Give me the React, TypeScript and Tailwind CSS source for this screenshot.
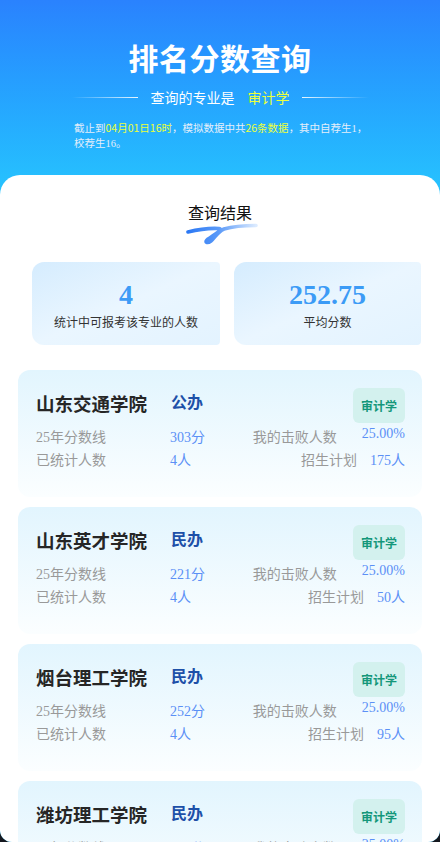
import React from "react";

const sans = { fontFamily: '"Noto Sans CJK SC", "Noto Sans", sans-serif' };
const serif = { fontFamily: '"Liberation Serif", "Noto Sans CJK SC", serif' };

type School = {
  name: string;
  type: string;
  score: string;
  count: string;
  beat: string;
  plan: string;
};

const schools: School[] = [
  { name: "山东交通学院", type: "公办", score: "303分", count: "4人", beat: "25.00%", plan: "175人" },
  { name: "山东英才学院", type: "民办", score: "221分", count: "4人", beat: "25.00%", plan: "50人" },
  { name: "烟台理工学院", type: "民办", score: "252分", count: "4人", beat: "25.00%", plan: "95人" },
  { name: "潍坊理工学院", type: "民办", score: "248分", count: "4人", beat: "25.00%", plan: "60人" },
];

function Squiggle() {
  return (
    <svg width="72" height="22" viewBox="0 0 72 22" className="block">
      <defs>
        <linearGradient id="sq" x1="0" y1="0" x2="1" y2="0">
          <stop offset="0" stopColor="#2b78f4" />
          <stop offset="0.45" stopColor="#5b9af8" />
          <stop offset="1" stopColor="#dcebff" />
        </linearGradient>
      </defs>
      <path
        d="M2 9 C 12 6.5, 24 5, 33 5.5 C 38 6, 28 12, 22 16 C 18 19, 21 21, 25 18 C 29 15, 31 9, 38 6 C 50 2.5, 62 2.5, 70 2.5"
        fill="none"
        stroke="url(#sq)"
        strokeWidth="3.6"
        strokeLinecap="round"
        strokeLinejoin="round"
      />
    </svg>
  );
}

function SchoolCard({ s }: { s: School }) {
  return (
    <div className="h-[127px] mb-[10px] shrink-0 rounded-[12px] bg-gradient-to-b from-[#e2f5fe] to-[#fbfeff] pt-[18px] pl-[18px] pr-[17px]">
      <div className="flex items-start justify-between">
        <div className="flex items-center pt-[3px]">
          <span className="text-[18.5px] leading-[24px] font-bold text-[#262626]" style={sans}>
            {s.name}
          </span>
          <span className="ml-[24px] -mt-[5px] text-[16px] leading-[22px] font-bold text-[#1d50a8]" style={sans}>
            {s.type}
          </span>
        </div>
        <div
          className="h-[35px] w-[52px] rounded-[6px] bg-[#d3f1ee] flex items-center justify-center text-[12px] font-bold text-[#14977a]"
          style={sans}
        >
          审计学
        </div>
      </div>
      <div className="mt-[3px] text-[14px] leading-[23px]" style={serif}>
        <div className="flex items-center">
          <span className="w-[134px] text-[#999999]">25年分数线</span>
          <span className="text-[#5b90f6]">{s.score}</span>
          <div className="flex-1 flex justify-end items-center">
            <span className="text-[#999999]">我的击败人数</span>
            <span className="ml-[25px] text-[#5b90f6] -translate-y-[4px]">{s.beat}</span>
          </div>
        </div>
        <div className="flex items-center">
          <span className="w-[134px] text-[#999999]">已统计人数</span>
          <span className="text-[#5b90f6]">{s.count}</span>
          <div className="flex-1 flex justify-end items-center">
            <span className="text-[#999999]">招生计划</span>
            <span className="ml-[13px] text-[#5b90f6]">{s.plan}</span>
          </div>
        </div>
      </div>
    </div>
  );
}

export default function App() {
  return (
    <div className="w-[440px] h-[842px] overflow-hidden bg-[#15181f]">
      <div className="h-full rounded-b-[12px] overflow-hidden flex flex-col bg-[#27c1fe]">
        {/* header */}
        <div className="h-[195px] -mb-[20px] shrink-0 flex flex-col items-center pt-[39px] bg-gradient-to-b from-[#2a82fe] to-[#27c4fe]">
          <h1 className="text-[30px] leading-[36px] font-bold text-white tracking-[0.5px]" style={sans}>
            排名分数查询
          </h1>
          <div className="mt-[12px] flex items-center h-[20px]">
            <div className="w-[66px] h-px bg-gradient-to-r from-transparent to-white/90" />
            <span className="ml-[13px] text-[14px] leading-[20px] text-white" style={sans}>
              查询的专业是
            </span>
            <span className="ml-[13px] text-[14px] leading-[20px] text-[#ebff3c]" style={sans}>
              审计学
            </span>
            <div className="ml-[12px] w-[67px] h-px bg-gradient-to-r from-white/90 to-transparent" />
          </div>
          <p
            className="mt-[13px] self-stretch pl-[74px] pr-[40px] text-[10.5px] leading-[15px] text-[#e4eefa] whitespace-nowrap"
            style={serif}
          >
            截止到<span className="text-[#eaff3a]" style={sans}>04月01日16时</span>，模拟数据中共
            <span className="text-[#eaff3a]" style={sans}>26条数据</span>，其中自荐生1，
            <br />
            校荐生16。
          </p>
        </div>

        {/* white panel */}
        <div className="relative flex-1 bg-white rounded-t-[20px] flex flex-col">
          <div className="flex flex-col items-center pt-[26px]">
            <div className="text-[16px] leading-[22px] text-[#111]" style={sans}>
              查询结果
            </div>
            <div className="ml-[4px]">
              <Squiggle />
            </div>
          </div>

          <div className="mt-[17px] pl-[32px] flex gap-[14px]">
            <div className="w-[188px] h-[83px] rounded-l-[12px] rounded-r-[4px] bg-gradient-to-br from-[#d5ecfe] via-[#eaf6ff] to-[#e3f3ff] flex flex-col items-center pt-[17px]">
              <div className="text-[28px] leading-[32px] font-bold text-[#3c9bf6]" style={serif}>
                4
              </div>
              <div className="mt-[3px] text-[12px] leading-[16px] text-[#333]" style={sans}>
                统计中可报考该专业的人数
              </div>
            </div>
            <div className="w-[187px] h-[83px] rounded-l-[12px] rounded-r-[4px] bg-gradient-to-br from-[#d5ecfe] via-[#eaf6ff] to-[#e3f3ff] flex flex-col items-center pt-[17px]">
              <div className="text-[28px] leading-[32px] font-bold text-[#3c9bf6]" style={serif}>
                252.75
              </div>
              <div className="mt-[3px] text-[12px] leading-[16px] text-[#333]" style={sans}>
                平均分数
              </div>
            </div>
          </div>

          <div className="mt-[25px] px-[18px] flex flex-col">
            {schools.map((s) => (
              <SchoolCard key={s.name} s={s} />
            ))}
          </div>
        </div>
      </div>
    </div>
  );
}
